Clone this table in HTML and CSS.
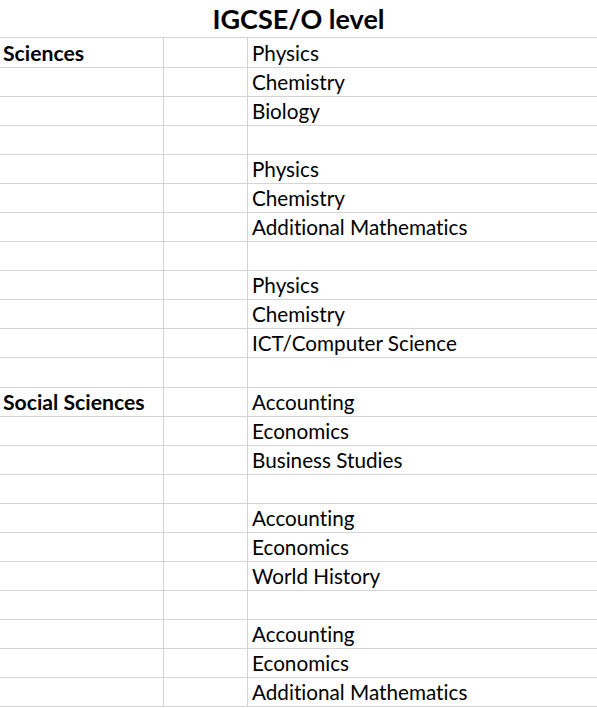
FILE: index.html
```html
<!DOCTYPE html>
<html lang="en">
    <head>
        <meta charset="UTF-8">
        <meta name="viewport" content="width=device-width, initial-scale=1.0">
        <title>IGCSE/O level</title>
        <link rel="stylesheet" href="styles.css">
    </head>
    <body>
        <div class="sheet">
            <div class="title">IGCSE/O level</div>

            <div class="cell group">Sciences</div><div class="cell"></div><div class="cell">Physics</div>
            <div class="cell"></div><div class="cell"></div><div class="cell">Chemistry</div>
            <div class="cell"></div><div class="cell"></div><div class="cell">Biology</div>
            <div class="cell"></div><div class="cell"></div><div class="cell"></div>
            <div class="cell"></div><div class="cell"></div><div class="cell">Physics</div>
            <div class="cell"></div><div class="cell"></div><div class="cell">Chemistry</div>
            <div class="cell"></div><div class="cell"></div><div class="cell">Additional Mathematics</div>
            <div class="cell"></div><div class="cell"></div><div class="cell"></div>
            <div class="cell"></div><div class="cell"></div><div class="cell">Physics</div>
            <div class="cell"></div><div class="cell"></div><div class="cell">Chemistry</div>
            <div class="cell"></div><div class="cell"></div><div class="cell">ICT/Computer Science</div>
            <div class="cell"></div><div class="cell"></div><div class="cell"></div>

            <div class="cell group">Social Sciences</div><div class="cell"></div><div class="cell">Accounting</div>
            <div class="cell"></div><div class="cell"></div><div class="cell">Economics</div>
            <div class="cell"></div><div class="cell"></div><div class="cell">Business Studies</div>
            <div class="cell"></div><div class="cell"></div><div class="cell"></div>
            <div class="cell"></div><div class="cell"></div><div class="cell">Accounting</div>
            <div class="cell"></div><div class="cell"></div><div class="cell">Economics</div>
            <div class="cell"></div><div class="cell"></div><div class="cell">World History</div>
            <div class="cell"></div><div class="cell"></div><div class="cell"></div>
            <div class="cell"></div><div class="cell"></div><div class="cell">Accounting</div>
            <div class="cell"></div><div class="cell"></div><div class="cell">Economics</div>
            <div class="cell"></div><div class="cell"></div><div class="cell">Additional Mathematics</div>
        </div>
    </body>
</html>
```

FILE: styles.css
```css
body {
    margin: 0;
    background-color: #fff;
    color: #000;
    font-family: Lato, "Open Sans", sans-serif;
    font-variant-ligatures: none;
}
.sheet {
    display: grid;
    grid-template-columns: 164px 84px 1fr;
    grid-template-rows: 38px 30px repeat(22, 29.05px);
}
.title {
    grid-column: 1 / 4;
    text-align: center;
    font-size: 27px;
    font-weight: bold;
    line-height: 38px;
    border-bottom: 1px solid #d4d4d4;
    box-sizing: border-box;
}
.cell {
    display: flex;
    align-items: flex-end;
    padding: 0 0 3px 4px;
    font-size: 20.7px;
    line-height: 22px;
    white-space: nowrap;
    border-bottom: 1px solid #d4d4d4;
    border-right: 1px solid #d4d4d4;
    box-sizing: border-box;
}
.cell:nth-child(3n+1) {
    border-right: none;
}
.group {
    padding-left: 3px;
    font-size: 21.2px;
    font-weight: bold;
}
```
